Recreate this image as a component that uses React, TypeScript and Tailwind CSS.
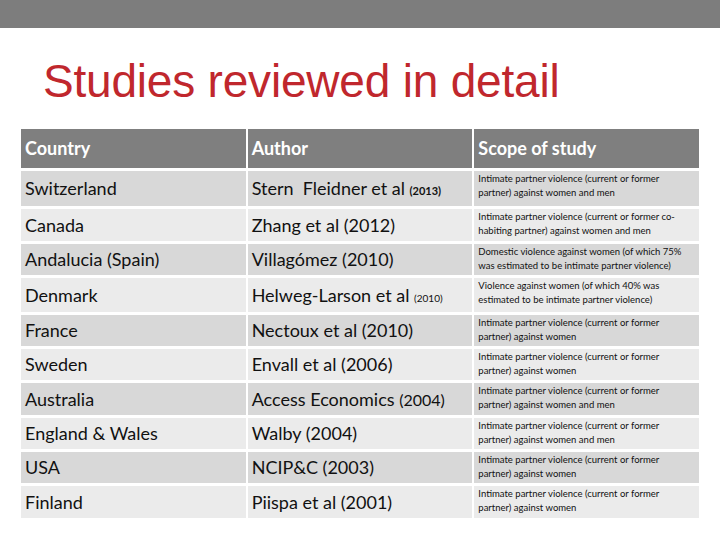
import React from 'react';

interface Row {
  country: string;
  author: React.ReactNode;
  scope: [string, string];
  h: string;
  bg: string;
}

const dark = 'bg-[#d8d8d8]';
const light = 'bg-[#ebebeb]';

const ipv = 'Intimate partner violence (current or former';

const rows: Row[] = [
  {
    country: 'Switzerland',
    author: (
      <>
        Stern&nbsp; Fleidner et al <span className="text-[11px] font-bold">(2013)</span>
      </>
    ),
    scope: [ipv, 'partner) against women and men'],
    h: 'h-[35px]',
    bg: dark,
  },
  {
    country: 'Canada',
    author: 'Zhang et al (2012)',
    scope: [ipv + ' co-', 'habiting partner) against women and men'],
    h: 'h-[32px]',
    bg: light,
  },
  {
    country: 'Andalucia (Spain)',
    author: 'Villagómez (2010)',
    scope: ['Domestic violence against women (of which 75%', 'was estimated to be intimate partner violence)'],
    h: 'h-[31px]',
    bg: dark,
  },
  {
    country: 'Denmark',
    author: (
      <>
        Helweg-Larson et al <span className="text-[10px]">(2010)</span>
      </>
    ),
    scope: ['Violence against women (of which 40% was', 'estimated to be intimate partner violence)'],
    h: 'h-[34px]',
    bg: light,
  },
  {
    country: 'France',
    author: 'Nectoux et al (2010)',
    scope: [ipv, 'partner) against women'],
    h: 'h-[31px]',
    bg: dark,
  },
  {
    country: 'Sweden',
    author: 'Envall et al (2006)',
    scope: [ipv, 'partner) against women'],
    h: 'h-[31px]',
    bg: light,
  },
  {
    country: 'Australia',
    author: (
      <>
        Access Economics <span className="text-[16px]">(2004)</span>
      </>
    ),
    scope: [ipv, 'partner) against women and men'],
    h: 'h-[32px]',
    bg: dark,
  },
  {
    country: 'England & Wales',
    author: 'Walby (2004)',
    scope: [ipv, 'partner) against women and men'],
    h: 'h-[31px]',
    bg: light,
  },
  {
    country: 'USA',
    author: 'NCIP&C (2003)',
    scope: [ipv, 'partner) against women'],
    h: 'h-[31px]',
    bg: dark,
  },
  {
    country: 'Finland',
    author: 'Piispa et al (2001)',
    scope: [ipv, 'partner) against women'],
    h: 'h-[32px]',
    bg: light,
  },
];

export default function App() {
  return (
    <div className="w-[720px] h-[540px] bg-white overflow-hidden">
      {/* top band */}
      <div className="h-[28px] bg-[#7d7d7d]" />

      {/* title */}
      <h1 className="pl-[43px] pt-[25px] h-[101px] text-[46px] leading-[56px] text-[#c0272d] font-['Liberation_Sans',Arial,sans-serif] tracking-[-0.2px]">
        Studies reviewed in detail
      </h1>

      {/* table */}
      <div className="ml-[21px] w-[678px] flex flex-col gap-[3px] font-['Lato','Open_Sans',sans-serif] text-[#111]">
        <div className="grid grid-cols-3 gap-x-[2px] h-[39px] text-white text-[18px] font-bold">
          <div className="bg-[#7f7f7f] flex items-center pl-[4px]">Country</div>
          <div className="bg-[#7f7f7f] flex items-center pl-[4px]">Author</div>
          <div className="bg-[#7f7f7f] flex items-center pl-[4px]">Scope of study</div>
        </div>

        {rows.map((r) => (
          <div key={r.country} className={`grid grid-cols-3 gap-x-[2px] ${r.h}`}>
            <div className={`${r.bg} flex items-center pl-[4px] text-[18px]`}>{r.country}</div>
            <div className={`${r.bg} flex items-center pl-[4px] text-[18px] whitespace-nowrap`}>
              <span>{r.author}</span>
            </div>
            <div className={`${r.bg} pl-[4px] pt-[1px] text-[9.5px] leading-[14px] whitespace-nowrap`}>
              <div>{r.scope[0]}</div>
              <div>{r.scope[1]}</div>
            </div>
          </div>
        ))}
      </div>
    </div>
  );
}
